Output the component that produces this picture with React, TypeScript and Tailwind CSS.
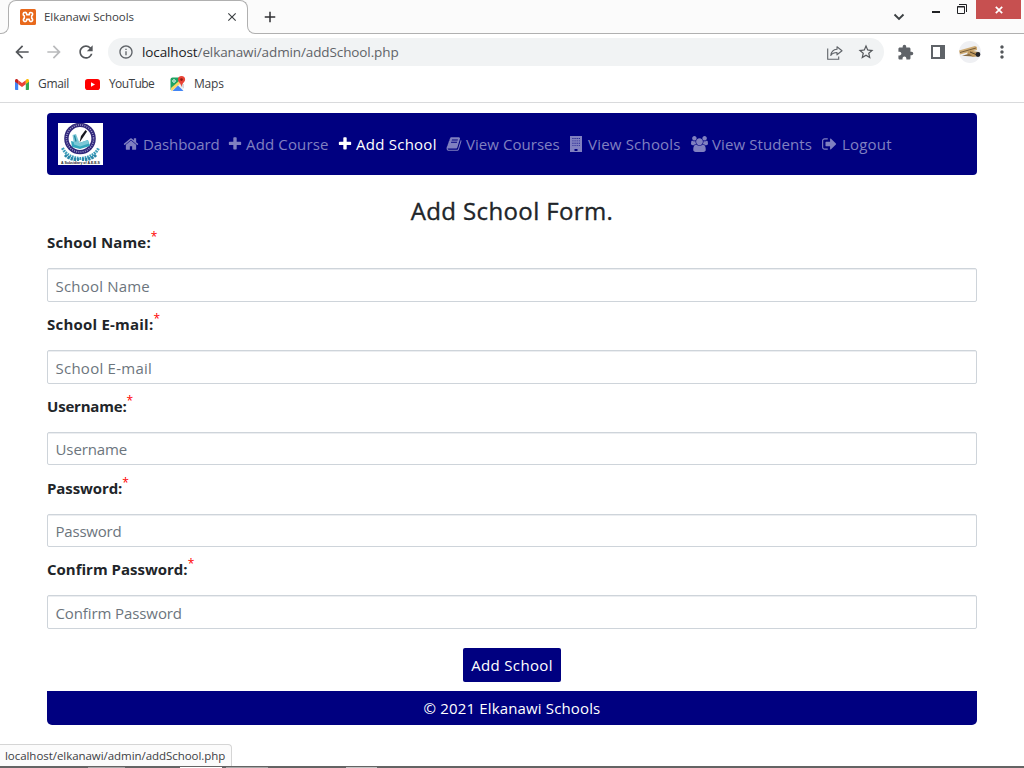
import React from "react";
import {
  MdArrowBack,
  MdArrowForward,
  MdRefresh,
  MdInfoOutline,
  MdStarBorder,
  MdExtension,
  MdMoreVert,
  MdClose,
  MdAdd,
} from "react-icons/md";

const HOME =
  "M1472 992v480q0 26-19 45t-45 19h-384v-384h-256v384h-384q-26 0-45-19t-19-45v-480q0-1 .5-3t.5-3l575-474 575 474q1 2 1 6zm223-69l-62 74q-8 9-21 11h-3q-13 0-21-7l-692-577-692 577q-12 8-24 7-13-2-21-11l-62-74q-8-10-7-23.5t11-21.5l719-599q32-26 76-26t76 26l244 204v-195q0-14 9-23t23-9h192q14 0 23 9t9 23v408l219 182q10 8 11 21.5t-7 23.5z";
const PLUS =
  "M1600 736v192q0 40-28 68t-68 28h-416v416q0 40-28 68t-68 28h-192q-40 0-68-28t-28-68v-416h-416q-40 0-68-28t-28-68v-192q0-40 28-68t68-28h416v-416q0-40 28-68t68-28h192q40 0 68 28t28 68v416h416q40 0 68 28t28 68z";
const BOOK =
  "M1703 478q40 57 18 129l-275 906q-19 64-76.5 107.5t-122.5 43.5h-923q-77 0-148.5-53.5t-99.5-131.5q-24-67-2-127 0-4 3-27t4-37q1-8-3-21.5t-3-19.5q2-11 8-21t16.5-23.5 16.5-23.5q23-38 45-91.5t30-91.5q3-10 .5-30t-.5-28q3-11 17-28t17-23q21-36 42-92t25-90q1-9-2.5-32t.5-28q4-13 22-30.5t22-22.5q19-26 42.5-84.5t27.5-96.5q1-8-3-25.5t-2-26.5q2-8 9-18t18-23 17-21q8-12 16.5-30.5t15-35 16-36 19.5-32 26.5-23.5 36-11.5 47.5 5.5l-1 3q38-9 51-9h761q74 0 114 56t18 130l-274 906q-36 119-71.5 153.5t-128.5 34.5h-869q-27 0-38 15-11 16-1 43 24 70 144 70h923q29 0 56-15.5t35-41.5l300-987q7-22 5-57 38 15 59 43zm-1064 2q-4 13 2 22.5t20 9.5h608q13 0 25.5-9.5t16.5-22.5l21-64q4-13-2-22.5t-20-9.5h-608q-13 0-25.5 9.5t-16.5 22.5zm-83 256q-4 13 2 22.5t20 9.5h608q13 0 25.5-9.5t16.5-22.5l21-64q4-13-2-22.5t-20-9.5h-608q-13 0-25.5 9.5t-16.5 22.5z";
const USERS =
  "M593 896q-162 5-265 128h-134q-82 0-138-40.5t-56-118.5q0-353 124-353 6 0 43.5 21t97.5 42.5 119 21.5q67 0 133-23-5 37-5 66 0 139 81 256zm1071 637q0 120-73 189.5t-194 69.5h-874q-121 0-194-69.5t-73-189.5q0-53 3.5-103.5t14-109 26.5-108.5 43-97.5 62-81 85.5-53.5 111.5-20q10 0 43 21.5t73 48 107 48 135 21.5 135-21.5 107-48 73-48 43-21.5q61 0 111.5 20t85.5 53.5 62 81 43 97.5 26.5 108.5 14 109 3.5 103.5zm-1024-1277q0 106-75 181t-181 75-181-75-75-181 75-181 181-75 181 75 75 181zm704 384q0 159-112.5 271.5t-271.5 112.5-271.5-112.5-112.5-271.5 112.5-271.5 271.5-112.5 271.5 112.5 112.5 271.5zm576 225q0 78-56 118.5t-138 40.5h-134q-103-123-265-128 81-117 81-256 0-29-5-66 66 23 133 23 59 0 119-21.5t97.5-42.5 43.5-21q124 0 124 353zm-128-609q0 106-75 181t-181 75-181-75-75-181 75-181 181-75 181 75 75 181z";
const SIGN_OUT =
  "M704 1440q0 4 1 20t.5 26.5-3 23.5-10 19.5-20.5 6.5h-320q-119 0-203.5-84.5t-84.5-203.5v-704q0-119 84.5-203.5t203.5-84.5h320q13 0 22.5 9.5t9.5 22.5q0 4 1 20t.5 26.5-3 23.5-10 19.5-20.5 6.5h-320q-66 0-113 47t-47 113v704q0 66 47 113t113 47h312l11.5 1 11.5 3 8 5.5 7 9 2 13.5zm928-544q0 26-19 45l-544 544q-19 19-45 19t-45-19-19-45v-288h-448q-26 0-45-19t-19-45v-384q0-26 19-45t45-19h448v-288q0-26 19-45t45-19 45 19l544 544q19 19 19 45z";
const BUILDING =
  "M.5 0h12v16H.5zM3 2v.9h.9V2zm2.100 0v.9h.9V2zm2.100 0v.9h.9V2zm2.100 0v.9h.9V2zM3 4.400v.9h.9v-.9zm2.100 0v.9h.9v-.9zm2.100 0v.9h.9v-.9zm2.100 0v.9h.9v-.9zM3 6.800v.9h.9v-.9zm2.100 0v.9h.9v-.9zm2.100 0v.9h.9v-.9zm2.100 0v.9h.9v-.9zM3 9.200v.9h.9v-.9zm2.100 0v.9h.9v-.9zm2.100 0v.9h.9v-.9zm2.100 0v.9h.9v-.9zM5 13v2h3v-2z";

type NavItem = {
  label: string;
  path: string;
  box: string;
  icon: string;
  item: string;
  text: string;
};

const NAV: NavItem[] = [
  { label: "Dashboard", path: HOME, box: "0 0 1792 1792", icon: "w-4 h-4", item: "w-[105px] text-[#8080c0]", text: "ml-[4px] tracking-[-0.1px]" },
  { label: "Add Course", path: PLUS, box: "96 0 1600 1792", icon: "w-[14px] h-4", item: "w-[110px] text-[#8080c0]", text: "ml-[4px] tracking-[0.15px]" },
  { label: "Add School", path: PLUS, box: "96 0 1600 1792", icon: "w-[14px] h-4", item: "w-[108px] text-white", text: "ml-[4px] tracking-[0.25px]" },
  { label: "View Courses", path: BOOK, box: "0 0 1792 1792", icon: "w-4 h-4", item: "w-[123px] text-[#8080c0]", text: "ml-[4px] tracking-[0.05px]" },
  { label: "View Schools", path: BUILDING, box: "0 0 13 16", icon: "w-[14px] h-4", item: "w-[122px] text-[#8080c0]", text: "ml-[5px] tracking-[0.2px]" },
  { label: "View Students", path: USERS, box: "0 0 1920 1792", icon: "w-[17px] h-4", item: "w-[131px] text-[#8080c0]", text: "ml-[4px] tracking-[0.1px]" },
  { label: "Logout", path: SIGN_OUT, box: "64 0 1664 1792", icon: "w-[15px] h-4", item: "text-[#8080c0]", text: "ml-[5px] tracking-[0.2px]" },
];

const FIELDS = [
  { label: "School Name:", hint: "School Name", labelTrack: "tracking-[0.15px]", hintTrack: "tracking-[0.2px]" },
  { label: "School E-mail:", hint: "School E-mail", labelTrack: "tracking-[0.22px]", hintTrack: "tracking-[0.25px]" },
  { label: "Username:", hint: "Username", labelTrack: "tracking-[-0.2px]", hintTrack: "tracking-[-0.1px]" },
  { label: "Password:", hint: "Password", labelTrack: "tracking-[-0.1px]", hintTrack: "tracking-[-0.2px]" },
  { label: "Confirm Password:", hint: "Confirm Password", labelTrack: "tracking-[0px]", hintTrack: "tracking-[-0.1px]" },
];

function XamppIcon() {
  return (
    <svg viewBox="0 0 16 16" className="h-4 w-4 shrink-0">
      <rect width="16" height="16" rx="1.5" fill="#e8691c" />
      <path
        d="M4.900 3.400a1.700 1.700 0 0 0-.6 3.300v2.600a1.700 1.700 0 1 0 2.400 2V10.200h2.600v1.100a1.700 1.700 0 1 0 2.400-2V6.700a1.700 1.700 0 1 0-2.400-2v1.100H6.700V4.700a1.700 1.700 0 0 0-1.800-1.300z"
        fill="none"
        stroke="#fff"
        strokeWidth="1.600"
        strokeLinejoin="round"
      />
    </svg>
  );
}

function GmailIcon() {
  return (
    <svg viewBox="0 0 14 11" className="h-[11px] w-[14px]">
      <path d="M0 2v8.2c0 .5.3.8.8.8h2.4V4.4z" fill="#4285f4" />
      <path d="M14 2v8.2c0 .5-.3.8-.8.8h-2.4V4.4z" fill="#34a853" />
      <path d="M3.2 1.2v4L7 8l3.8-2.8v-4L7 4z" fill="#ea4335" />
      <path d="M0 1.6C0 .2 1.5-.4 2.6.5l.6.6v4L0 2.8z" fill="#c5221f" />
      <path d="M14 1.6c0-1.4-1.5-2-2.6-1.1l-.6.6v4L14 2.8z" fill="#fbbc04" />
    </svg>
  );
}

function MapsIcon() {
  return (
    <svg viewBox="0 0 16 16" className="h-4 w-4">
      <path d="M1 3h12v12H1z" fill="#f1f1f1" />
      <path d="M.5 3.500Q.5 1.500 2.500 1.500H9v6L.5 14z" fill="#1fa463" />
      <path d="M1 12l8-7 2 2-9.5 8.2z" fill="#fdd663" />
      <path d="M2.500 15l5.500-5.500 5.500 5.500z" fill="#4285f4" />
      <path d="M9.500 8.300l4.500 4.500V8z" fill="#d6d9dc" />
      <circle cx="4" cy="5" r="1.300" fill="none" stroke="#fff" strokeWidth=".9" />
      <path d="M11.500 0a3.600 3.600 0 0 1 3.600 3.600c0 2.600-3 3.600-3.600 7.600C11 7.200 8 6.200 8 3.600A3.500 3.600 0 0 1 11.500 0z" fill="#ea4335" />
      <circle cx="11.500" cy="3.600" r="1.300" fill="#8b1a12" />
    </svg>
  );
}

function SchoolLogo() {
  return (
    <svg viewBox="0 0 45 42" className="h-[42px] w-[45px] shrink-0">
      <rect width="45" height="42" fill="#fff" />
      <path d="M4.500 25q4.500 9.500 18 10.500Q36 34.500 40.500 25" fill="none" stroke="#3a9cba" strokeWidth="3" strokeDasharray="1.800 .8" />
      <path d="M7 32q5 5 14 4.500M38 32q-5 5-14 4.500" fill="none" stroke="#2b87a8" strokeWidth="3" strokeDasharray="2.500 .8" />
      <circle cx="22" cy="15.500" r="13.600" fill="#fff" stroke="#30277a" strokeWidth="4.400" />
      <circle cx="22" cy="15.500" r="13.600" fill="none" stroke="#a9a4d2" strokeWidth="1.500" strokeDasharray=".9 1.300" />
      <path d="M13 18l8 2 9-3 2 6-10 3-8-2z" fill="#35a7bd" />
      <path d="M14.500 12l3.500-1 3.500 9 8-3 1.500 3.500-9 3-6-2z" fill="#7cc8d6" />
      <path d="M16.500 12.500l1.500 6" stroke="#1c7f99" strokeWidth="1.200" />
      <path d="M27.500 7l-4.500 6-1.500 6.500 3.500-5 4-6z" fill="#17171d" />
      <text x="22.500" y="41.400" fontSize="3.500" fontWeight="700" textAnchor="middle" fill="#222" className="font-['Liberation_Sans',sans-serif]">
        A Subsidiary of A.E.E.S
      </text>
    </svg>
  );
}

function ProfilePhoto() {
  return (
    <svg viewBox="0 0 22 22" className="h-[22px] w-[22px]">
      <clipPath id="avatar">
        <circle cx="11" cy="11" r="11" />
      </clipPath>
      <g clipPath="url(#avatar)">
        <rect width="22" height="22" fill="#eff0f3" />
        <path d="M0 9.500L16 5l2 1v3L1 13.500z" fill="#cfac75" />
        <path d="M1 11.500l16-4.500" stroke="#6a5232" strokeWidth=".9" />
        <path d="M10 9.500l10 1.500 1 4-7 1-6-3.500z" fill="#c09a60" />
        <path d="M3 14.800l7-2 4 2.700z" fill="#8a6c42" />
        <path d="M11 11l6 2.500" stroke="#4a3a26" strokeWidth=".9" />
        <circle cx="19" cy="13.500" r="2.400" fill="#23252c" />
      </g>
    </svg>
  );
}

function BrowserChrome() {
  return (
    <header className="h-[103px] shrink-0 border-b border-[#d9dadc] bg-white text-[12px] text-[#3c4043]">
      <div className="flex h-[34px] bg-[#fbfbfb]">
        <div className="flex w-[256px] flex-col">
          <div className="ml-2 flex h-[25px] w-[240px] rounded-t-lg border border-b-0 border-[#b0b0b0] bg-white pt-2 pr-[8px] pl-[11px]">
            <XamppIcon />
            <span className="ml-2 flex-1 text-[11.5px] leading-4 tracking-[-0.07px] whitespace-nowrap">Elkanawi Schools</span>
            <MdClose className="mt-px h-[14px] w-[14px] text-[#3c4043]" />
          </div>
          <div className="flex h-[9px] justify-between bg-white">
            <div className="h-[9px] w-[9px] rounded-br-lg border-r border-b border-[#b0b0b0] bg-[#fbfbfb]" />
            <div className="h-[9px] w-[9px] rounded-bl-lg border-b border-l border-[#b0b0b0] bg-[#fbfbfb]" />
          </div>
        </div>
        <div className="flex flex-1 border-b border-[#b0b0b0]">
          <MdAdd className="mt-[8px] ml-[5px] h-[18px] w-[18px] text-[#303134]" />
          <svg viewBox="0 0 12 8" className="mt-[13px] ml-auto h-2 w-3">
            <path d="M1.500 1.500L6 6l4.500-4.500" fill="none" stroke="#3c4043" strokeWidth="1.900" />
          </svg>
          <div className="mt-[11px] ml-[27px] h-[2px] w-2 bg-[#202124]" />
          <svg viewBox="0 0 10 10" className="mt-1 ml-[17px] h-[10px] w-[10px]">
            <path d="M.5 2.500h7v7h-7zM.5 3h7M2 .5h7.500V8" fill="none" stroke="#202124" />
          </svg>
          <div className="ml-[9px] flex h-[19px] w-[45px] items-center justify-center bg-[#c75050]">
            <svg viewBox="0 0 8 8" className="h-2 w-2">
              <path d="M.8.8l6.400 6.400M7.200.8L.8 7.200" stroke="#fff" strokeWidth="1.700" />
            </svg>
          </div>
          <div className="w-[3px]" />
        </div>
      </div>
      <div className="flex h-9 items-center">
        <MdArrowBack className="ml-3 h-5 w-5 text-[#54575b]" />
        <MdArrowForward className="ml-3 h-5 w-5 text-[#b9babc]" />
        <MdRefresh className="ml-3 h-5 w-5 text-[#54575b]" />
        <div className="ml-3 flex h-7 w-[776px] items-center rounded-full bg-[#f1f3f4]">
          <MdInfoOutline className="ml-[10px] h-4 w-4 text-[#5f6368]" />
          <span className="ml-2 text-[13.5px] tracking-[-0.11px] text-[#5f6368]">
            <span className="text-[#202124]">localhost</span>/elkanawi/admin/addSchool.php
          </span>
          <svg viewBox="0 0 16 14" className="mt-px ml-auto h-[14px] w-4">
            <path d="M.7 2.500v10.800h11V10.500" fill="none" stroke="#5f6368" strokeWidth="1.100" />
            <path d="M10 .8l5 4-5 4V6.500C7 6.500 5 7.600 3.800 9.500c.3-3.400 2.700-6 6.200-6.300z" fill="none" stroke="#5f6368" strokeWidth="1.100" strokeLinejoin="round" />
          </svg>
          <MdStarBorder className="mr-[9px] ml-[14px] h-[18px] w-[18px] text-[#54575b]" />
        </div>
        <MdExtension className="ml-[13px] h-[17px] w-[17px] text-[#5f6368]" />
        <div className="ml-[17px] h-[14px] w-[14px] border-2 border-r-[5px] border-[#5f6368] bg-white" />
        <div className="ml-[14px]">
          <ProfilePhoto />
        </div>
        <MdMoreVert className="ml-[11px] h-5 w-5 text-[#54575b]" />
      </div>
      <div className="flex h-7 items-center text-[12px]">
        <div className="ml-[15px] flex w-[70px] items-center gap-[9px]">
          <GmailIcon />
          <span className="tracking-[-0.3px]">Gmail</span>
        </div>
        <div className="flex w-[85px] items-center gap-[9px]">
          <svg viewBox="0 0 15 11" className="h-[11px] w-[15px] shrink-0">
            <rect width="15" height="11" rx="2.800" fill="#f00" />
            <path d="M6 3.200v4.600l4-2.300z" fill="#fff" />
          </svg>
          <span className="tracking-[-0.6px]">YouTube</span>
        </div>
        <div className="flex items-center gap-[8px]">
          <MapsIcon />
          <span className="tracking-[-0.2px]">Maps</span>
        </div>
      </div>
    </header>
  );
}

export default function App() {
  return (
    <div className="relative flex h-[768px] w-[1024px] flex-col overflow-hidden bg-white font-['Open_Sans','Noto_Sans',sans-serif] text-[#212529]">
      <BrowserChrome />
      <main className="mt-[10px] flex flex-1 flex-col px-[47px]">
        <nav className="flex h-[62px] shrink-0 items-center rounded-[4px] bg-[#000080] pl-[11px]">
          <SchoolLogo />
          <div className="ml-5 flex items-center">
            {NAV.map((n) => (
              <a key={n.label} className={`flex h-6 shrink-0 items-center whitespace-nowrap ${n.item}`}>
                <svg viewBox={n.box} className={`shrink-0 ${n.icon}`} fill="currentColor">
                  <path d={n.path} />
                </svg>
                <span className={`text-[15px] leading-6 ${n.text}`}>{n.label}</span>
              </a>
            ))}
          </div>
        </nav>
        <h4 className="mt-[20px] h-[35.2px] text-center text-[24px] leading-[32px] font-medium tracking-[0.38px] [-webkit-text-stroke:0.35px_#212529]">
          Add School Form.
        </h4>
        <form className="flex flex-col">
          {FIELDS.map((f) => (
            <div key={f.label} className="h-[81.8px]">
              <label className="flex h-6 items-start text-[15px] leading-6 font-bold">
                <span className={f.labelTrack}>{f.label}</span>
                <span className="-mt-[5px] text-[12px] font-normal text-[#ff0000]">*</span>
              </label>
              <div className="mt-[14px] flex h-[33.6px] items-center rounded-[2px] border border-[#ced4da] pt-[2px] pl-[7.500px] text-[15px] text-[#6c757d] shadow-[inset_0_1px_0_#eceef1]">
                <span className={f.hintTrack}>{f.hint}</span>
              </div>
            </div>
          ))}
          <button type="button" className="mt-[8.800px] flex h-[34px] w-[98px] items-center justify-center self-center rounded-[2px] bg-[#000080] text-[15px] tracking-[0.35px] text-white">
            Add School
          </button>
        </form>
        <footer className="mt-[9px] flex h-[34px] shrink-0 items-center justify-center rounded-b-[5px] bg-[#000080] text-[15px] tracking-[0.15px] text-white">
          © 2021 Elkanawi Schools
        </footer>
      </main>
      <div className="absolute bottom-[2px] left-0 flex h-[22px] w-[232px] items-center rounded-tr-[4px] border-t border-r border-[#d5d5d5] bg-[#fbfbfb] pl-[5px] text-[11.5px] tracking-[-0.05px] whitespace-nowrap text-[#3c4043]">
        localhost/elkanawi/admin/addSchool.php
      </div>
      <div className="flex h-[2px] shrink-0 bg-[#646464]">
        <div className="mt-px ml-[88px] w-[37px] bg-[#a8a8a8]" />
        <div className="mt-px ml-[55px] w-[42px] bg-white" />
        <div className="mt-px ml-[4px] w-[42px] bg-[#a8a8a8]" />
        <div className="mt-px ml-[78px] w-[31px] bg-[#c4c4c4]" />
      </div>
    </div>
  );
}
